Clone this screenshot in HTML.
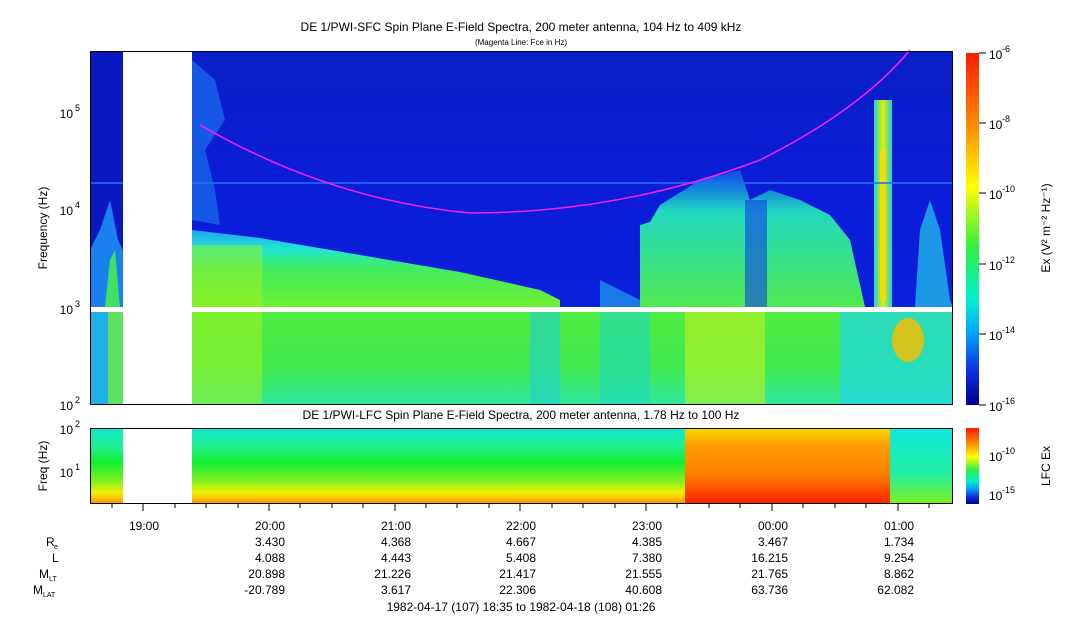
<!DOCTYPE html><html><head><style>body{margin:0;background:#fff}svg text{font-family:"Liberation Sans",sans-serif}</style></head><body>
<svg width="1083" height="620" viewBox="0 0 1083 620" xmlns="http://www.w3.org/2000/svg">
<defs>
<linearGradient id="cb" x1="0" y1="0" x2="0" y2="1">
<stop offset="0" stop-color="#ff1a00"/><stop offset="0.2" stop-color="#ff8800"/><stop offset="0.38" stop-color="#ffff00"/><stop offset="0.55" stop-color="#30f040"/><stop offset="0.7" stop-color="#00f0d0"/><stop offset="0.8" stop-color="#00a0ff"/><stop offset="0.9" stop-color="#1030e0"/><stop offset="1" stop-color="#000090"/></linearGradient>
<linearGradient id="up" x1="0" y1="0" x2="0" y2="1">
<stop offset="0" stop-color="#0a1ec8"/><stop offset="0.4" stop-color="#0a1cd8"/><stop offset="1" stop-color="#0c24e0"/></linearGradient>
<linearGradient id="grn" x1="0" y1="0" x2="0" y2="1">
<stop offset="0" stop-color="#20a0f0"/><stop offset="0.25" stop-color="#20e8d0"/><stop offset="0.5" stop-color="#40ec60"/><stop offset="1" stop-color="#70f030"/></linearGradient>
<linearGradient id="low" x1="0" y1="0" x2="0" y2="1">
<stop offset="0" stop-color="#50ec40"/><stop offset="0.6" stop-color="#40ea50"/><stop offset="1" stop-color="#30e8a0"/></linearGradient>
<linearGradient id="lp" x1="0" y1="0" x2="0" y2="1">
<stop offset="0" stop-color="#10e8d0"/><stop offset="0.25" stop-color="#20f090"/><stop offset="0.45" stop-color="#10f030"/><stop offset="0.7" stop-color="#80f020"/><stop offset="0.85" stop-color="#f0f000"/><stop offset="1" stop-color="#ff9000"/></linearGradient>
<linearGradient id="lr" x1="0" y1="0" x2="0" y2="1">
<stop offset="0" stop-color="#f0e000"/><stop offset="0.2" stop-color="#ffa000"/><stop offset="0.6" stop-color="#ff8000"/><stop offset="1" stop-color="#ff2000"/></linearGradient>
<linearGradient id="lrt" x1="0" y1="0" x2="0" y2="1">
<stop offset="0" stop-color="#10e8e0"/><stop offset="0.6" stop-color="#20f0a0"/><stop offset="1" stop-color="#80f020"/></linearGradient>
<linearGradient id="str" x1="0" y1="0" x2="0" y2="1">
<stop offset="0" stop-color="#1060f0" stop-opacity="0.7"/><stop offset="0.3" stop-color="#20d8c0"/><stop offset="1" stop-color="#50ea50"/></linearGradient>
<linearGradient id="sp" x1="0" y1="0" x2="1" y2="0">
<stop offset="0" stop-color="#20d0e0"/><stop offset="0.5" stop-color="#e0f000"/><stop offset="1" stop-color="#20d0e0"/></linearGradient>
</defs>
<text x="521" y="31" font-size="12" text-anchor="middle">DE 1/PWI-SFC  Spin Plane E-Field Spectra, 200 meter antenna, 104 Hz to 409 kHz</text>
<text x="521" y="45" font-size="8" text-anchor="middle">(Magenta Line: Fce in Hz)</text>
<rect x="90" y="51" width="863" height="354" fill="url(#up)"/>
<rect x="90" y="51" width="33" height="200" fill="#0a18c0"/>
<polygon points="90,250 100,230 110,200 118,240 123,250 123,307 90,307" fill="#1a80f0"/>
<polygon points="105,307 110,260 115,250 120,307" fill="#40e060"/>
<polygon points="192,60 215,80 225,120 205,150 215,190 220,225 192,220" fill="#1a70f0" opacity="0.7"/>
<polygon points="192,230 260,238 360,255 460,272 540,290 560,300 560,307 192,307" fill="url(#grn)"/>
<rect x="192" y="245" width="70" height="62" fill="#a0f020" opacity="0.5"/>
<polygon points="640,225 650,222 660,205 700,180 740,170 750,200 770,190 800,200 830,215 850,240 865,307 640,307" fill="url(#str)"/>
<rect x="745" y="200" width="22" height="107" fill="#1040e8" opacity="0.6"/>
<polygon points="600,280 640,300 640,307 600,307" fill="#20a0f0" opacity="0.7"/>
<rect x="874" y="100" width="18" height="207" fill="url(#sp)"/>
<rect x="880" y="150" width="6" height="150" fill="#f0e000"/>
<polygon points="920,230 930,200 940,230 950,300 953,307 915,307" fill="#20b8e8" opacity="0.8"/>
<rect x="90" y="182" width="863" height="2" fill="#2070f0" opacity="0.8"/>
<rect x="90" y="312" width="863" height="93" fill="url(#low)"/>
<rect x="90" y="312" width="33" height="93" fill="#20b0e8"/>
<rect x="108" y="312" width="15" height="93" fill="#60e060"/>
<rect x="192" y="312" width="70" height="93" fill="#a0f020" opacity="0.55"/>
<rect x="530" y="312" width="30" height="93" fill="#20d0d0" opacity="0.6"/>
<rect x="600" y="312" width="50" height="93" fill="#20d8c0" opacity="0.6"/>
<rect x="685" y="312" width="80" height="93" fill="#c0f020" opacity="0.6"/>
<rect x="840" y="312" width="113" height="93" fill="#20d8e0" opacity="0.75"/>
<ellipse cx="908" cy="340" rx="16" ry="22" fill="#f0c000" opacity="0.85"/>
<rect x="123" y="51" width="69" height="354" fill="#fff"/>
<rect x="90" y="307" width="863" height="5" fill="#fff"/>
<path d="M200,125 Q330,200 470,213 Q620,213 760,160 Q860,110 910,50" fill="none" stroke="#ff20ff" stroke-width="1.5"/>
<rect x="90.5" y="51.5" width="862" height="353" fill="none" stroke="#000"/>
<g font-size="12" text-anchor="end">
<text x="73" y="118">10</text><text x="80" y="111" font-size="9">5</text>
<text x="73" y="215">10</text><text x="80" y="208" font-size="9">4</text>
<text x="73" y="314">10</text><text x="80" y="307" font-size="9">3</text>
<text x="73" y="410">10</text><text x="80" y="403" font-size="9">2</text>
</g>
<text transform="translate(47,228) rotate(-90)" font-size="12" text-anchor="middle">Frequency (Hz)</text>
<rect x="966" y="53" width="13" height="352" fill="url(#cb)"/>
<g stroke="#000"><line x1="979" y1="53" x2="986" y2="53"/><line x1="979" y1="123" x2="986" y2="123"/><line x1="979" y1="193" x2="986" y2="193"/><line x1="979" y1="264" x2="986" y2="264"/><line x1="979" y1="334" x2="986" y2="334"/><line x1="979" y1="405" x2="986" y2="405"/></g>
<g font-size="12">
<text x="989" y="59">10</text><text x="1002" y="52" font-size="9">-6</text>
<text x="989" y="129">10</text><text x="1002" y="122" font-size="9">-8</text>
<text x="989" y="199">10</text><text x="1002" y="192" font-size="9">-10</text>
<text x="989" y="270">10</text><text x="1002" y="263" font-size="9">-12</text>
<text x="989" y="340">10</text><text x="1002" y="333" font-size="9">-14</text>
<text x="989" y="411">10</text><text x="1002" y="404" font-size="9">-16</text>
</g>
<text transform="translate(1050,228) rotate(-90)" font-size="12" text-anchor="middle">Ex (V² m⁻² Hz⁻¹)</text>
<text x="521" y="419" font-size="12" text-anchor="middle">DE 1/PWI-LFC  Spin Plane E-Field Spectra, 200 meter antenna, 1.78 Hz to 100 Hz</text>
<rect x="90" y="428" width="863" height="76" fill="url(#lp)"/>
<rect x="685" y="428" width="205" height="76" fill="url(#lr)"/>
<rect x="890" y="428" width="63" height="76" fill="url(#lrt)"/>
<rect x="123" y="428" width="69" height="76" fill="#fff"/>
<rect x="90.5" y="428.5" width="862" height="75" fill="none" stroke="#000"/>
<g font-size="12" text-anchor="end">
<text x="73" y="434">10</text><text x="80" y="427" font-size="9">2</text>
<text x="73" y="477">10</text><text x="80" y="470" font-size="9">1</text>
</g>
<text transform="translate(47,466) rotate(-90)" font-size="12" text-anchor="middle">Freq (Hz)</text>
<rect x="966" y="428" width="13" height="76" fill="url(#cb)"/>
<g font-size="12">
<text x="989" y="461">10</text><text x="1002" y="454" font-size="9">-10</text>
<text x="989" y="500">10</text><text x="1002" y="493" font-size="9">-15</text>
</g>
<text transform="translate(1050,466) rotate(-90)" font-size="12" text-anchor="middle">LFC Ex</text>
<g stroke="#000">
<line x1="143" y1="504" x2="143" y2="511"/><line x1="269" y1="504" x2="269" y2="511"/><line x1="395" y1="504" x2="395" y2="511"/><line x1="520" y1="504" x2="520" y2="511"/><line x1="646" y1="504" x2="646" y2="511"/><line x1="772" y1="504" x2="772" y2="511"/><line x1="898" y1="504" x2="898" y2="511"/>
<line x1="112" y1="504" x2="112" y2="508"/><line x1="175" y1="504" x2="175" y2="508"/><line x1="206" y1="504" x2="206" y2="508"/><line x1="238" y1="504" x2="238" y2="508"/><line x1="300" y1="504" x2="300" y2="508"/><line x1="332" y1="504" x2="332" y2="508"/><line x1="363" y1="504" x2="363" y2="508"/><line x1="426" y1="504" x2="426" y2="508"/><line x1="457" y1="504" x2="457" y2="508"/><line x1="489" y1="504" x2="489" y2="508"/><line x1="552" y1="504" x2="552" y2="508"/><line x1="583" y1="504" x2="583" y2="508"/><line x1="615" y1="504" x2="615" y2="508"/><line x1="677" y1="504" x2="677" y2="508"/><line x1="709" y1="504" x2="709" y2="508"/><line x1="740" y1="504" x2="740" y2="508"/><line x1="803" y1="504" x2="803" y2="508"/><line x1="835" y1="504" x2="835" y2="508"/><line x1="866" y1="504" x2="866" y2="508"/><line x1="929" y1="504" x2="929" y2="508"/>
</g>
<g font-size="12" text-anchor="end">
<text x="159" y="530">19:00</text><text x="285" y="530">20:00</text><text x="411" y="530">21:00</text><text x="536" y="530">22:00</text><text x="662" y="530">23:00</text><text x="788" y="530">00:00</text><text x="914" y="530">01:00</text>
<text x="285" y="546">3.430</text><text x="411" y="546">4.368</text><text x="536" y="546">4.667</text><text x="662" y="546">4.385</text><text x="788" y="546">3.467</text><text x="914" y="546">1.734</text>
<text x="285" y="562">4.088</text><text x="411" y="562">4.443</text><text x="536" y="562">5.408</text><text x="662" y="562">7.380</text><text x="788" y="562">16.215</text><text x="914" y="562">9.254</text>
<text x="285" y="578">20.898</text><text x="411" y="578">21.226</text><text x="536" y="578">21.417</text><text x="662" y="578">21.555</text><text x="788" y="578">21.765</text><text x="914" y="578">8.862</text>
<text x="285" y="594">-20.789</text><text x="411" y="594">3.617</text><text x="536" y="594">22.306</text><text x="662" y="594">40.608</text><text x="788" y="594">63.736</text><text x="914" y="594">62.082</text>
</g>
<g font-size="12">
<text x="46" y="546">R</text><text x="54" y="549" font-size="7">e</text>
<text x="52" y="562">L</text>
<text x="39" y="578">M</text><text x="49" y="581" font-size="7">LT</text>
<text x="33" y="594">M</text><text x="43" y="597" font-size="7">LAT</text>
</g>
<text x="521" y="611" font-size="12" text-anchor="middle">1982-04-17 (107) 18:35 to 1982-04-18 (108) 01:26</text>
</svg>
</body></html>
